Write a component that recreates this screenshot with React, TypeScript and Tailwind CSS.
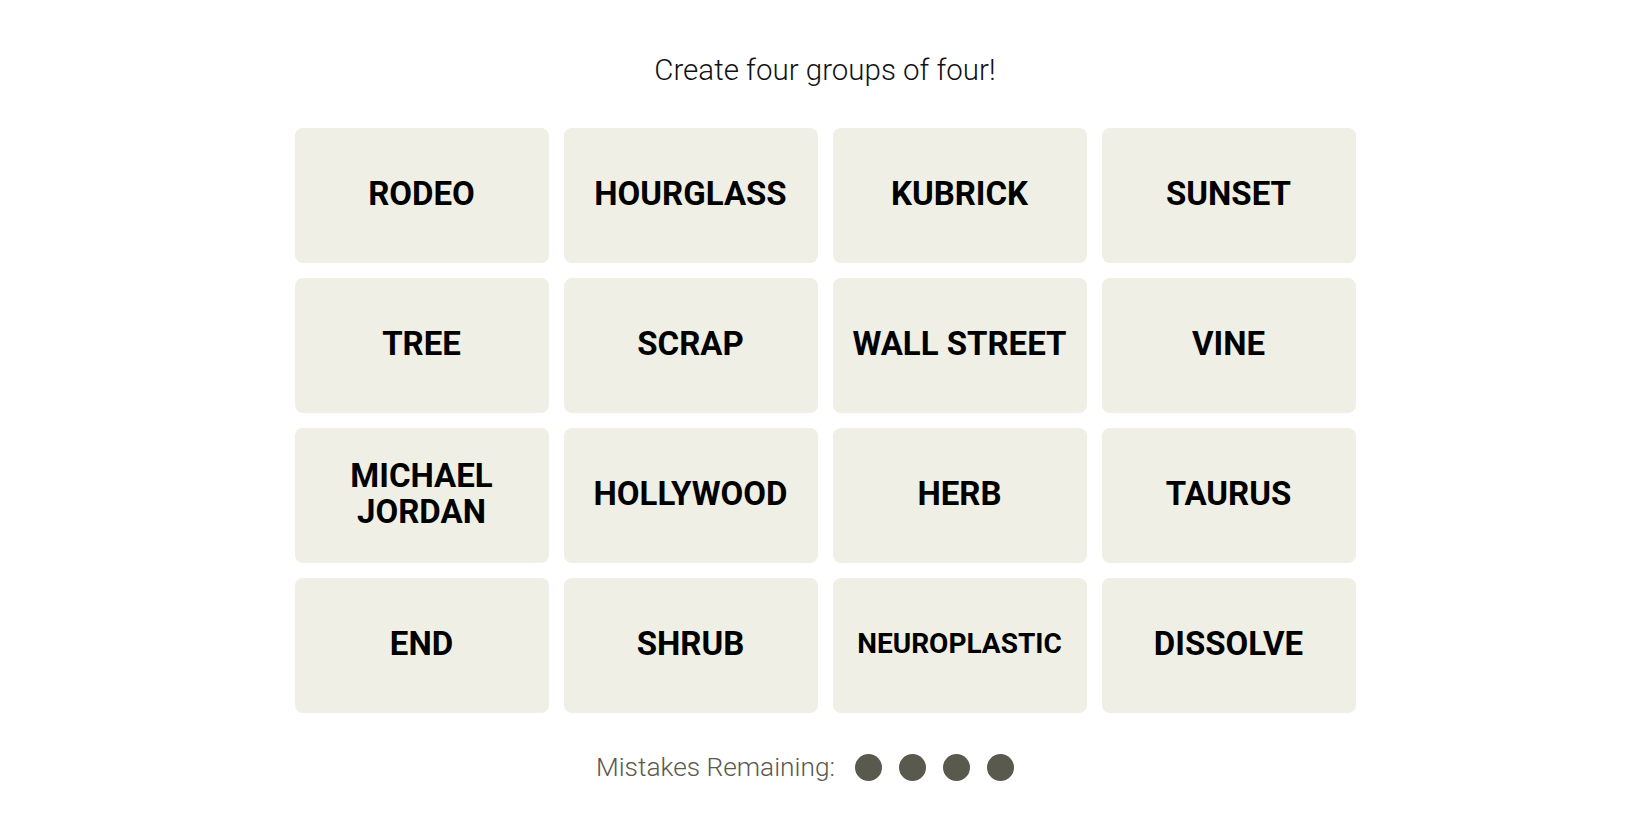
import React from "react";

const words = [
  "RODEO", "HOURGLASS", "KUBRICK", "SUNSET",
  "TREE", "SCRAP", "WALL STREET", "VINE",
  "MICHAEL JORDAN", "HOLLYWOOD", "HERB", "TAURUS",
  "END", "SHRUB", "NEUROPLASTIC", "DISSOLVE",
];

export default function App() {
  return (
    <div
      className="min-h-screen w-full bg-white flex flex-col items-center pt-[52px]"
      style={{ fontFamily: "Roboto, 'Liberation Sans', sans-serif" }}
    >
      <p className="text-[29.5px] leading-[36px] font-light text-[#121212]">
        Create four groups of four!
      </p>
      <div className="mt-[40px] grid grid-cols-[repeat(4,254px)] auto-rows-[135px] gap-[15px]">
        {words.map((w) => (
          <div
            key={w}
            className="bg-[#efefe6] rounded-[8px] flex items-center justify-center text-center px-[8px] pb-[4px] select-none"
          >
            <span
              className={
                w === "NEUROPLASTIC"
                  ? "text-[28px] leading-[34px] font-bold text-black"
                  : "text-[33px] leading-[36px] font-bold text-black"
              }
            >
              {w}
            </span>
          </div>
        ))}
      </div>
      <div className="mt-[38px] mr-[40px] flex items-center h-[32px]">
        <span className="text-[26.3px] leading-[32px] font-light text-[#5a594e]">
          Mistakes Remaining:
        </span>
        <div className="ml-[20px] flex items-center gap-[17px]">
          {[0, 1, 2, 3].map((i) => (
            <span key={i} className="block w-[27px] h-[27px] rounded-full bg-[#5a594e]" />
          ))}
        </div>
      </div>
    </div>
  );
}
